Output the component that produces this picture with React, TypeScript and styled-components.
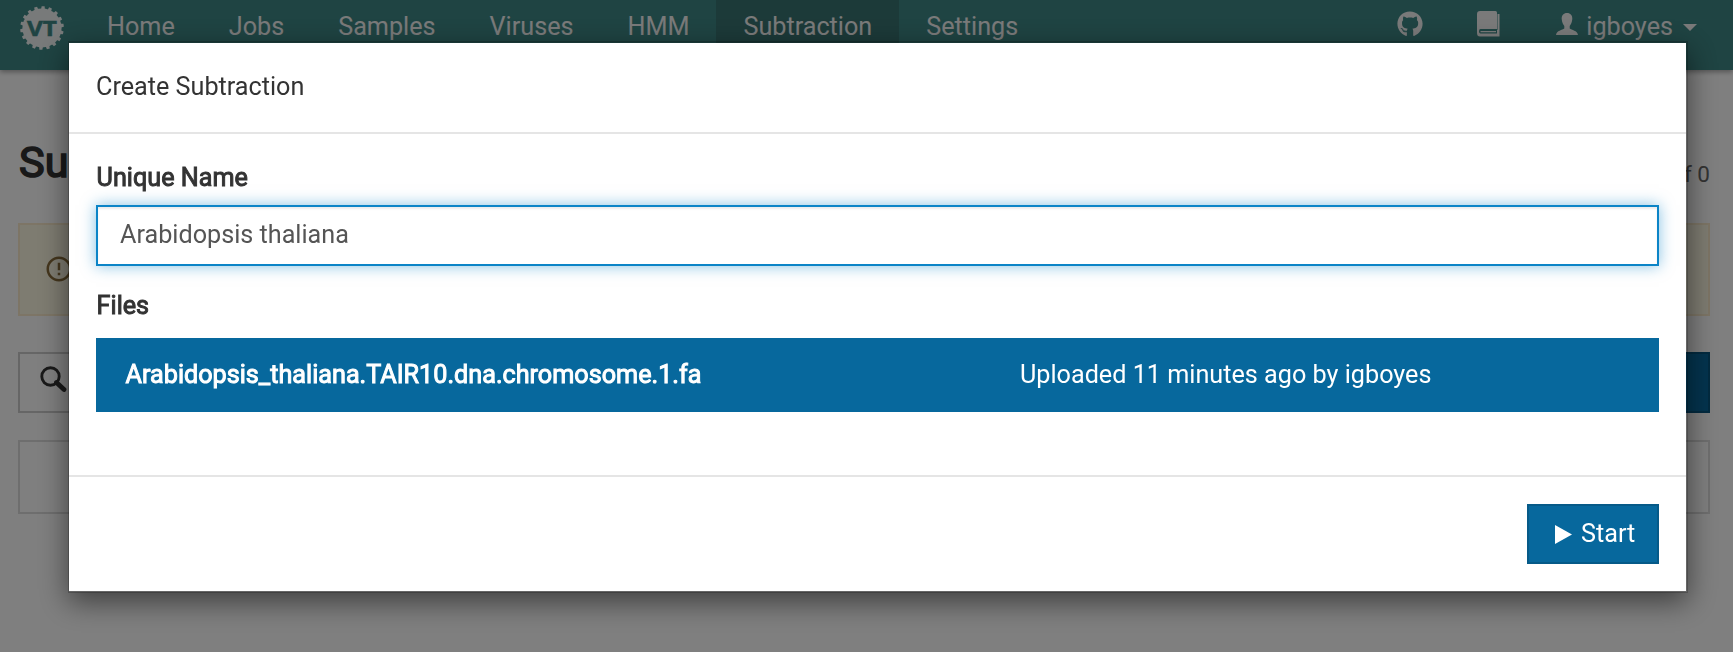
import React from 'react';
import styled, { createGlobalStyle, css } from 'styled-components';
import { FaGithub } from 'react-icons/fa';
import { MdErrorOutline } from 'react-icons/md';

const GlobalStyle = createGlobalStyle`
  * { box-sizing: border-box; }
  body {
    margin: 0;
    height: 652px;
    overflow: hidden;
    background: #fff;
    color: #333;
    font: 25.2px/36px Roboto, "Liberation Sans", sans-serif;
  }
`;

const heavy = css`
  font-weight: 400;
  -webkit-text-stroke: 0.95px currentColor;
`;

const NavBar = styled.nav`
  display: flex;
  align-items: stretch;
  height: 70px;
  padding-left: 20px;
  background: #3e8886;
  color: #f4f4f4;
  box-shadow: 0 2px 5px rgba(0, 0, 0, 0.35);
  position: relative;
`;

const Logo = styled.svg`
  width: 44px;
  height: 44px;
  margin: 6px 16px 0 0;
  fill: #f0f4f4;
`;

const NavItem = styled.a<{ $active?: boolean }>`
  padding: 9px 27px 0;
  background: ${(p) => (p.$active ? '#397472' : 'transparent')};
`;

const NavRight = styled.div`
  display: flex;
  margin-left: auto;
  padding-right: 36px;
`;

const NavIcon = styled.span<{ $top: number; $gap: number }>`
  padding-top: ${(p) => p.$top}px;
  margin-right: ${(p) => p.$gap}px;
  line-height: 0;
`;

const UserName = styled.span`
  padding-top: 9px;
  margin-right: 10px;
`;

const Caret = styled.span`
  margin-top: 24px;
  height: 0;
  border: 7px solid transparent;
  border-top-color: currentColor;
  border-bottom: 0;
`;

const Page = styled.main`
  padding: 68px 23px 0 18px;
`;

const PageHeader = styled.header`
  display: flex;
  justify-content: space-between;
  height: 85px;
`;

const PageTitle = styled.h1`
  margin: 0;
  padding-left: 1px;
  font-size: 43.2px;
  line-height: 50px;
  font-weight: 400;
  -webkit-text-stroke: 1.6px currentColor;
`;

const Count = styled.span`
  padding-top: 18px;
  font-size: 22.5px;
  color: #666;
`;

const Notice = styled.div`
  display: flex;
  align-items: center;
  height: 93px;
  padding: 0 0 2px 24px;
  border: 2px solid #faebcc;
  background: #fcf8e3;
  color: #8a6d3b;
  font-size: 30px;
`;

const Toolbar = styled.div`
  display: flex;
  height: 61px;
  margin-top: 36px;
`;

const SearchBox = styled.div`
  flex: 1;
  padding: 12px 0 0 20px;
  border: 2px solid #ccc;
`;

const CreateButton = styled.button`
  width: 64px;
  margin-left: 9px;
  background: #07689d;
  border: 2px solid #06557f;
`;

const EmptyPanel = styled.div`
  height: 74px;
  margin-top: 27px;
  border: 2px solid #ddd;
`;

const Backdrop = styled.div`
  position: fixed;
  inset: 0;
  padding: 41px 45px 0 68px;
  background: rgba(0, 0, 0, 0.5);
`;

const Dialog = styled.section`
  height: 552px;
  border: 2px solid rgba(0, 0, 0, 0.2);
  border-left-width: 1px;
  background: #fff;
  background-clip: padding-box;
  box-shadow: 0 9px 27px rgba(0, 0, 0, 0.5);
`;

const DialogHeader = styled.header`
  height: 91px;
  padding: 26px 27px 0;
  border-bottom: 2px solid #e5e5e5;
`;

const DialogBody = styled.div`
  height: 341px;
  padding: 26px 27px 0;
`;

const Label = styled.label`
  display: block;
  padding-left: 0.6px;
  ${heavy}
`;

const NameInput = styled.input`
  display: block;
  width: 100%;
  height: 61px;
  margin: 9px 0 22px;
  padding: 0 22px 2px;
  border: 2px solid #0b84c7;
  outline: 0;
  font: inherit;
  color: #555;
  box-shadow: inset 0 2px 2px rgba(0, 0, 0, 0.075), 0 0 14px rgba(11, 132, 199, 0.5);
`;

const FileRow = styled.div`
  display: flex;
  height: 74px;
  margin-top: 14px;
  padding: 19px 29px 0;
  background: #07689d;
  color: #fff;
`;

const FileName = styled.strong`
  width: 895px;
  padding-left: 0.6px;
  ${heavy}
`;

const DialogFooter = styled.footer`
  display: flex;
  justify-content: flex-end;
  padding: 27px;
  border-top: 2px solid #e5e5e5;
`;

const StartButton = styled.button`
  display: flex;
  align-items: center;
  width: 132px;
  height: 60px;
  padding: 0 0 0 26px;
  gap: 9px;
  border: 2px solid #065a88;
  background: #07689d;
  color: #fff;
  font: inherit;
`;

const LogoText = styled.text`
  font: 700 21.5px "Open Sans", sans-serif;
  fill: #3e8886;
  stroke: #3e8886;
  stroke-width: 0.5px;
`;

const teeth = Array.from({ length: 18 }, (_, i) => i * 20 + 3);

const NAV = ['Home', 'Jobs', 'Samples', 'Viruses', 'HMM', 'Subtraction', 'Settings'];

export default function App() {
  return (
    <>
      <GlobalStyle />
      <NavBar>
        <Logo viewBox="0 0 44 44">
          <circle cx="22" cy="22" r="19.6" />
          {teeth.map((a) => (
            <path key={a} d="M20 4L20.5 .2H23.5L24 4Z" transform={`rotate(${a} 22 22)`} />
          ))}
          <LogoText x="22" y="30.3" textAnchor="middle" textLength="30" lengthAdjust="spacingAndGlyphs">VT</LogoText>
        </Logo>
        {NAV.map((n) => (
          <NavItem key={n} $active={n === 'Subtraction'}>{n}</NavItem>
        ))}
        <NavRight>
          <NavIcon $top={11} $gap={54}><FaGithub size={26} /></NavIcon>
          <NavIcon $top={11} $gap={56}>
            <svg width="23" height="26" viewBox="0 0 23 26" fill="currentColor">
              <path fillRule="evenodd" d="M3 0H18.5Q20 0 20 1.500V18H3.500Q2 18 2 20.200T3.500 22.500H20V19H20.500V3H22.500V25.500H3Q0 25.500 0 22V3Q0 0 3 0ZM3.500 20H19V21.300H3.500Z" />
            </svg>
          </NavIcon>
          <NavIcon $top={13} $gap={8}>
            <svg width="22" height="22" viewBox="0 0 22 22" fill="currentColor">
              <path d="M11 0C14.500 0 16.500 2.400 16.300 6C16.100 9.500 14.800 11.500 13.700 13V15.500C15.500 17 21.500 17.500 22 22H0C.5 17.500 6.500 17 8.300 15.500V13C7.200 11.500 5.900 9.500 5.700 6C5.500 2.400 7.500 0 11 0Z" />
            </svg>
          </NavIcon>
          <UserName>igboyes</UserName>
          <Caret />
        </NavRight>
      </NavBar>
      <Page>
        <PageHeader>
          <PageTitle>Subtraction</PageTitle>
          <Count>Viewing 0 of 0</Count>
        </PageHeader>
        <Notice><MdErrorOutline /></Notice>
        <Toolbar>
          <SearchBox>
            <svg width="27" height="27" viewBox="0 0 27 27" fill="none" stroke="#333">
              <circle cx="10.500" cy="10.500" r="8.700" strokeWidth="2.900" />
              <path d="M16.500 16.500L24 23.500" strokeWidth="4.800" strokeLinecap="round" />
            </svg>
          </SearchBox>
          <CreateButton />
        </Toolbar>
        <EmptyPanel />
      </Page>
      <Backdrop>
        <Dialog>
          <DialogHeader>Create Subtraction</DialogHeader>
          <DialogBody>
            <Label>Unique Name</Label>
            <NameInput defaultValue="Arabidopsis thaliana" />
            <Label>Files</Label>
            <FileRow>
              <FileName>Arabidopsis_thaliana.TAIR10.dna.chromosome.1.fa</FileName>
              <span>Uploaded 11 minutes ago by igboyes</span>
            </FileRow>
          </DialogBody>
          <DialogFooter>
            <StartButton>
              <svg width="17" height="19" viewBox="0 0 17 19" fill="currentColor"><path d="M0 0L17 9.500L0 19Z" /></svg>
              Start
            </StartButton>
          </DialogFooter>
        </Dialog>
      </Backdrop>
    </>
  );
}
